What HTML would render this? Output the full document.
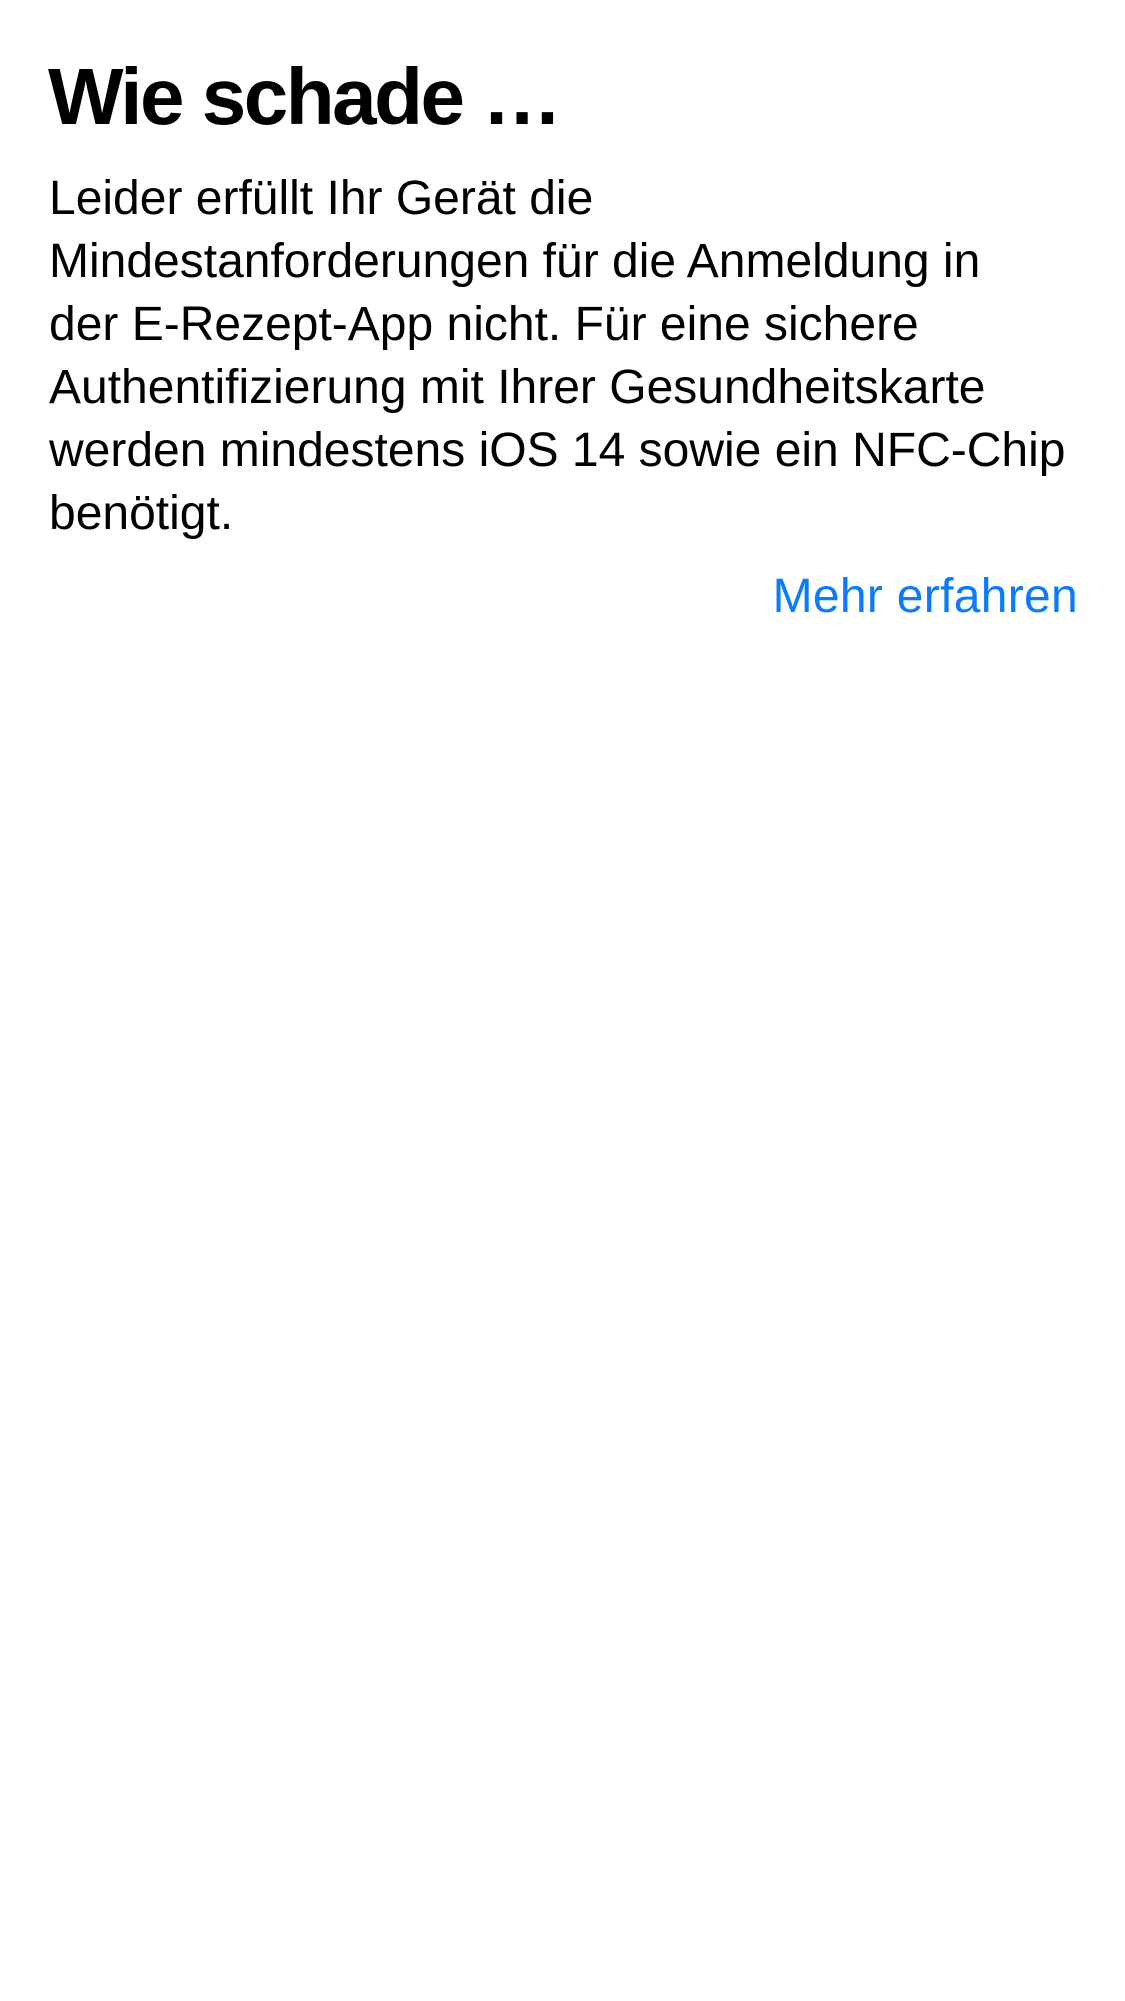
<!DOCTYPE html>
<html><head><meta charset="utf-8"><style>
html,body{margin:0;padding:0;background:#fff;width:1125px;height:2001px;overflow:hidden}
body{font-family:"Liberation Sans",sans-serif;color:#000;position:relative}
.t{position:absolute;left:48px;top:47px;font-size:80px;font-weight:bold;line-height:100px;white-space:nowrap;letter-spacing:-2.5px}
.b{position:absolute;left:49px;white-space:nowrap;font-size:48px;line-height:63px;letter-spacing:0}
.l{position:absolute;right:47px;top:565px;font-size:48px;line-height:63px;color:#0a7aff;white-space:nowrap;letter-spacing:0.3px}
</style></head><body>
<div class="t">Wie schade …</div>
<div class="b" style="top:167px">Leider erfüllt Ihr Gerät die<br>Mindestanforderungen für die Anmeldung in<br>der E-Rezept-App nicht. Für eine sichere<br>Authentifizierung mit Ihrer Gesundheitskarte<br>werden mindestens iOS 14 sowie ein NFC-Chip<br>benötigt.</div>
<div class="l">Mehr erfahren</div>
</body></html>
